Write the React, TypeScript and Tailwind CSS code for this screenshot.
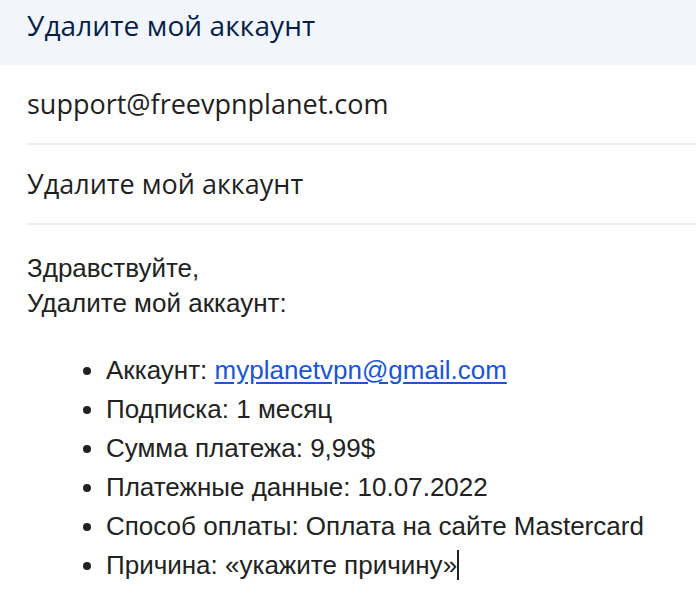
export default function App() {
  const items: [string, React.ReactNode][] = [
    ["Аккаунт: ", <a key="a" className="text-[#1a56d2] underline underline-offset-[3px]" href="#">myplanetvpn@gmail.com</a>],
    ["Подписка: 1 месяц", null],
    ["Сумма платежа: 9,99$", null],
    ["Платежные данные: 10.07.2022", null],
    ["Способ оплаты: Оплата на сайте Mastercard", null],
  ];
  return (
    <div className="w-[696px] h-[616px] bg-white overflow-hidden">
      <div className="h-[65px] bg-[#f2f6fc] pl-[27px] flex items-center pb-[15px]">
        <span className="text-[28px] font-medium text-[#041e49] tracking-[0.1px]" style={{ fontFamily: '"Open Sans", Roboto, sans-serif' }}>
          Удалите мой аккаунт
        </span>
      </div>
      <div className="ml-[27px]" style={{ fontFamily: '"Open Sans", Roboto, sans-serif' }}>
        <div className="h-[80px] flex items-center border-b-2 border-[#efefef] text-[27px] text-[#1f1f1f]">
          support@freevpnplanet.com
        </div>
        <div className="h-[80px] flex items-center border-b-2 border-[#efefef] text-[27px] text-[#1f1f1f]">
          Удалите мой аккаунт
        </div>
      </div>
      <div className="pl-[27px] pt-[26px] text-[26px] text-[#222222] leading-[35px]" style={{ fontFamily: '"Liberation Sans", Arial, sans-serif' }}>
        <div>Здравствуйте,</div>
        <div>Удалите мой аккаунт:</div>
        <ul className="list-disc pl-[79px] mt-[30px] leading-[39px]">
          {items.map(([t, extra], i) => (
            <li key={i}>{t}{extra}</li>
          ))}
          <li>
            Причина: «укажите причину»<span className="inline-block w-[2px] h-[30px] bg-[#222] align-[-6px]" />
          </li>
        </ul>
      </div>
    </div>
  );
}
